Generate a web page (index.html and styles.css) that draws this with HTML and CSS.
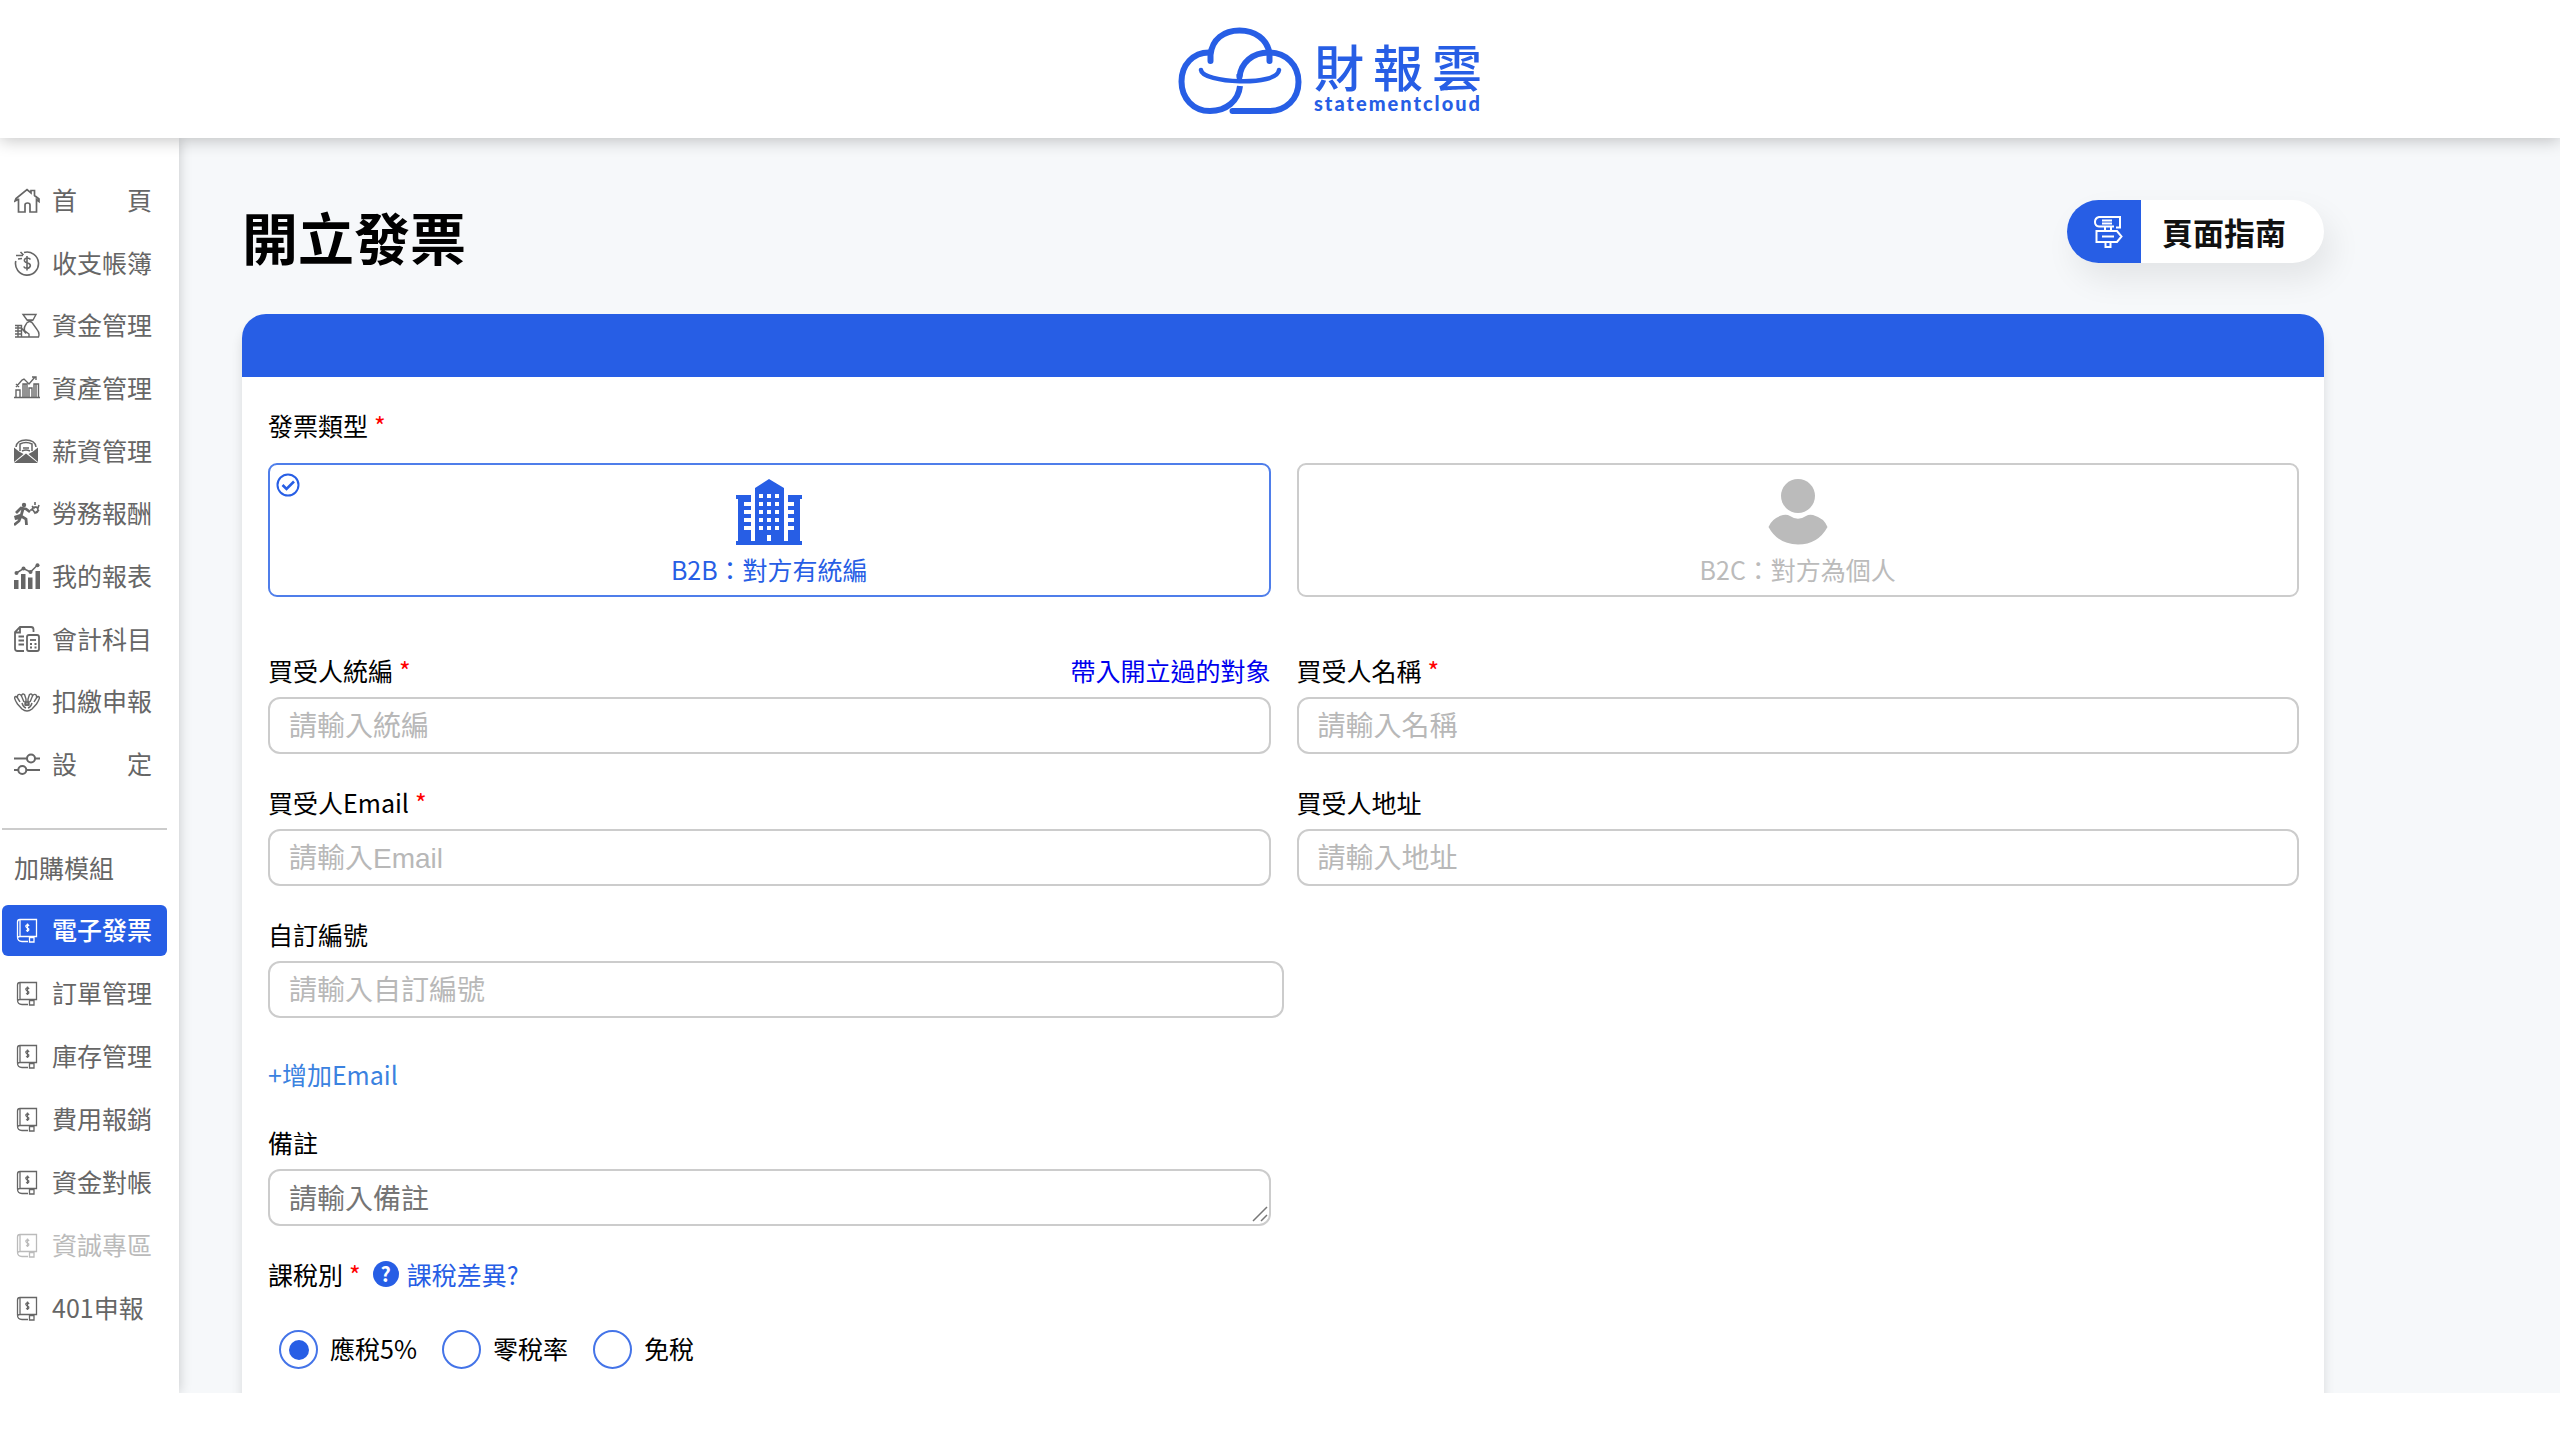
FILE: index.html
```html
<!DOCTYPE html>
<html lang="zh-Hant">
<head>
<meta charset="utf-8">
<meta name="viewport" content="width=device-width, initial-scale=1">
<title>開立發票 - 財報雲</title>
<link rel="stylesheet" href="styles.css">
</head>
<body>
<svg class="sprite" aria-hidden="true">
  <symbol id="receipt" viewBox="0 0 26 26">
    <path d="M6 1.500H22.500V18.500H6Z M6 1.500Q3.500 1.500 3.500 4V19Q3.500 23.500 8 23.500H14 M3.500 20Q4 18.500 6 18.500 M15.500 19.500h4.500v4.500h-4.500z M15 8Q14.500 6.500 13 6.800Q11.500 7.200 12 8.800Q12.500 9.800 13.500 10Q15.200 10.500 14.800 12Q14 13.500 12 12.500 M13.500 5.500V14" fill="none" stroke="currentColor" stroke-width="1.300"/>
  </symbol>
</svg>

<header class="topbar">
  <a class="logo" href="#">
    <svg class="logo-cloud" viewBox="0 0 124 88" fill="none" stroke="currentColor" stroke-width="6" stroke-linecap="round" aria-hidden="true">
      <path d="M32.500 34V28C34 12 46 3.500 61.500 3.500S89 12 91.500 26V34"/>
      <path d="M31 25.500C15 25.500 3.500 38 3.500 54.500S15 84 32 84C48 84 60.500 74 62 59" stroke-linecap="butt"/>
      <path d="M61.500 50C63 36 74 25.500 91 25.500C108 25.500 120.500 38 120.500 55S108 84 91 84H54.500"/>
      <path d="M61.500 49.500V47" stroke-linecap="butt"/>
      <path d="M23 43C24 56 99 60 101 43" stroke-width="4.500"/>
    </svg>
    <span class="logo-text">
      <span class="logo-zh"><span>財</span><span>報</span><span>雲</span></span>
      <span class="logo-en">statementcloud</span>
    </span>
  </a>
</header>

<div class="shell">
  <nav class="sidebar" aria-label="主選單">
    <ul class="menu menu-main">
      <li><a class="item" href="#">
        <svg class="icon" viewBox="0 0 26 26" fill="none" stroke="currentColor" stroke-width="1.700"><path d="M4 11.500L1 13L2 10.500L13 1.500L17 5V2.500H20.500V7.500L25 11V13.500L22.500 11.500V24H16V17Q16 15 13.500 15T11 17V24H4.500V10.500"/></svg>
        <span class="spread"><span>首</span><span>頁</span></span></a></li>
      <li><a class="item" href="#">
        <svg class="icon" viewBox="0 0 26 26" fill="none" stroke="currentColor" stroke-width="1.600"><path d="M10 2.500A11.500 11.500 0 1 1 1.800 11M2 5.500H9M6.500 2L9.500 5M4 9L8 8.500M16.500 9.500Q15.500 8 13 8Q10 8.500 10.500 11Q11 12.500 13.500 13Q16.500 13.800 16.300 16Q15.500 18.300 13 18.300Q10.500 18.200 9.700 16.500M13 6V20.500"/></svg>
        <span>收支帳簿</span></a></li>
      <li><a class="item" href="#">
        <svg class="icon" viewBox="0 0 26 26" fill="none" stroke="currentColor" stroke-width="1.400"><path d="M9 1.500H22L19 7H13ZM13 7L18 9.500M19 7L13 9.500M13.500 9C11 13 9 15 11 18L15 21V24H24.500Q26 20 23 16.500L18 9.500M1 12.500H7.500V24H1M1 15H7M1 18H7M1 21H7M4 12.500V24M7.500 24H15M7.500 15L12 20.500"/></svg>
        <span>資金管理</span></a></li>
      <li><a class="item" href="#">
        <svg class="icon" viewBox="0 0 26 26" fill="none" stroke="currentColor" stroke-width="1.400"><path d="M0 22.500H26M2 22V15H6V22M9 22V9H13V22M11 9V22M15 22V13H18V22M20 22V9H24.500V22M22 9V22M2 12L8 5L10 4L15 9L21 2M18 2H22V5M2 9L5 12"/></svg>
        <span>資產管理</span></a></li>
      <li><a class="item" href="#">
        <svg class="icon" viewBox="0 0 26 26"><path d="M0 9.500L5 13.500L9.500 16L0 24ZM24 9.500L19 13.500L14.500 16L24 24ZM0 25L12 15.500L24 25Z" fill="currentColor"/><path d="M2 9Q3 2 12 2T22 9M6 13V6Q12 3 18 6V13M9 10H15M8 13Q12 11 16 13" fill="none" stroke="currentColor" stroke-width="1.500"/></svg>
        <span>薪資管理</span></a></li>
      <li><a class="item" href="#">
        <svg class="icon" viewBox="0 0 26 26"><circle cx="10" cy="4" r="2.200" fill="currentColor"/><path d="M2 12L7 7L12 8L16 11M9 8L7 15L12 18L12.500 24M7 15L5 20L0 24" fill="none" stroke="currentColor" stroke-width="2.800"/><path d="M0 15L6 13L7 18L1 19Z" fill="currentColor"/><path d="M16 9H19L21 12L25 9M18 5L20 7Q22 5 24 7L25 4M21 1V4M18 9Q18 6 21 6T24 9T21 12" fill="none" stroke="currentColor" stroke-width="1.600"/></svg>
        <span>勞務報酬</span></a></li>
      <li><a class="item" href="#">
        <svg class="icon" viewBox="0 0 26 26"><path d="M0 17H4.500V26H0ZM7 11H11.500V26H7ZM14 14.500H18.500V26H14ZM21.500 8H26V26H21.500Z" fill="currentColor"/><path d="M2.500 10L9.500 5.500L16.500 9L23.500 2" fill="none" stroke="currentColor" stroke-width="1.500"/><g fill="currentColor"><circle cx="2.500" cy="10" r="2"/><circle cx="9.500" cy="5.500" r="2"/><circle cx="16.500" cy="9" r="2"/><circle cx="23.500" cy="2.200" r="2"/></g></svg>
        <span>我的報表</span></a></li>
      <li><a class="item" href="#">
        <svg class="icon" viewBox="0 0 26 26" fill="none" stroke="currentColor" stroke-width="1.800"><path d="M10 25H3.500Q1 25 1 22.500V6L6 1H17Q19.500 1 19.500 3.500V6M1 6.500H6V1M4.500 10.500H10M4.500 14.500H10M4.500 18.500H10"/><rect x="13" y="9" width="12" height="16" rx="2"/><path d="M16 14H22"/><path d="M16 18H18M20.500 18H22.500M16 21.500H18M20.500 21.500H22.500"/></svg>
        <span>會計科目</span></a></li>
      <li><a class="item" href="#">
        <svg class="icon" viewBox="0 0 26 26" fill="none" stroke="currentColor" stroke-width="1.400"><path d="M8 20L3.500 15Q-1 8 1.500 7.500Q3 7.500 6 13M3.500 9V6.500Q5.500 4 7.500 7L10 13M7.500 7Q8 4 10.500 5.500L12 10V17M18 20L22.500 15Q27 8 24.500 7.500Q23 7.500 20 13M22.500 9V6.500Q20.500 4 18.500 7L16 13M18.500 7Q18 4 15.500 5.500L14 10V17M8 14Q9 18 12 19M18 14Q17 18 14 19M8 20Q13 24 18 20M11 13H15V16H11Z"/></svg>
        <span>扣繳申報</span></a></li>
      <li><a class="item" href="#">
        <svg class="icon" viewBox="0 0 26 26" fill="none" stroke="currentColor" stroke-width="2"><path d="M0 7.500H13M21 7.500H26M0 19H4M12.500 19H26"/><circle cx="17" cy="7.500" r="4"/><circle cx="8.300" cy="19" r="4"/></svg>
        <span class="spread"><span>設</span><span>定</span></span></a></li>
    </ul>
    <hr class="rule">
    <p class="menu-title">加購模組</p>
    <ul class="menu menu-addon">
      <li><a class="item active" href="#" aria-current="page"><svg class="icon"><use href="#receipt"/></svg><span>電子發票</span></a></li>
      <li><a class="item" href="#"><svg class="icon"><use href="#receipt"/></svg><span>訂單管理</span></a></li>
      <li><a class="item" href="#"><svg class="icon"><use href="#receipt"/></svg><span>庫存管理</span></a></li>
      <li><a class="item" href="#"><svg class="icon"><use href="#receipt"/></svg><span>費用報銷</span></a></li>
      <li><a class="item" href="#"><svg class="icon"><use href="#receipt"/></svg><span>資金對帳</span></a></li>
      <li><a class="item disabled" href="#" aria-disabled="true"><svg class="icon"><use href="#receipt"/></svg><span>資誠專區</span></a></li>
      <li><a class="item" href="#"><svg class="icon"><use href="#receipt"/></svg><span>401申報</span></a></li>
    </ul>
  </nav>

  <main class="content">
    <div class="page-head">
      <h1>開立發票</h1>
      <button class="guide" type="button">
        <span class="guide-icon">
          <svg viewBox="0 0 30 34" fill="none" stroke="currentColor" stroke-width="2" aria-hidden="true"><path d="M21 11.500H6Q2 11 2 7T6 2H27V12.500H23M9 5.500H19M9 8.500H19M12 12V16M18 12V16M3.500 16H24L28.500 21.500L24 27H3.500ZM9 21.500H21M12.500 27V32H17.500V27"/></svg>
        </span>
        <span class="guide-text">頁面指南</span>
      </button>
    </div>

    <section class="card">
      <div class="card-bar"></div>
      <form class="form">
        <fieldset class="types">
          <legend class="label">發票類型<span class="req">*</span></legend>
          <div class="columns">
            <button class="type selected" type="button" aria-pressed="true">
              <svg class="tick" viewBox="0 0 24 24" fill="none" stroke="currentColor" stroke-width="2" aria-hidden="true"><circle cx="12" cy="12" r="10.500"/><path d="M6.500 12L10.500 16L18 8.500" stroke-width="2.600"/></svg>
              <svg class="type-icon" viewBox="0 0 66 66" fill="currentColor" aria-hidden="true"><path fill-rule="evenodd" d="M0 66V62H2V20H0V16H15V23H8V27H15V31H8V35H15V39H8V43H15V47H8V51H15V62H19V9L33 0L48 9V62H52V51H58V47H52V43H58V39H52V35H58V31H52V27H58V23H52V16H66V20H64V62H66V66ZM23 15v4h4v-4zM31 15v4h4v-4zM39 15v4h4v-4zM23 23v4h4v-4zM31 23v4h4v-4zM39 23v4h4v-4zM23 31v4h4v-4zM31 31v4h4v-4zM39 31v4h4v-4zM23 39v4h4v-4zM31 39v4h4v-4zM39 39v4h4v-4zM23 47v4h4v-4zM31 47v4h4v-4zM39 47v4h4v-4zM31 56v6h4v-6z"/></svg>
              <span>B2B：對方有統編</span>
            </button>
            <button class="type" type="button" aria-pressed="false">
              <svg class="type-icon" viewBox="0 0 66 66" fill="currentColor" aria-hidden="true"><circle cx="33" cy="17" r="17"/><path d="M18 36Q22 35 25 37Q33 42.500 41 37Q44 35 48 36Q59 39 62.500 48Q53 65.500 33 65.500T3.500 48Q7 39 18 36Z"/></svg>
              <span>B2C：對方為個人</span>
            </button>
          </div>
        </fieldset>

        <div class="columns rows">
          <div class="field">
            <div class="label-row">
              <label class="label" for="tax-id">買受人統編<span class="req">*</span></label>
              <a class="pick" href="#">帶入開立過的對象</a>
            </div>
            <input id="tax-id" type="text" placeholder="請輸入統編">
          </div>
          <div class="field">
            <label class="label" for="buyer">買受人名稱<span class="req">*</span></label>
            <input id="buyer" type="text" placeholder="請輸入名稱">
          </div>
          <div class="field">
            <label class="label" for="email">買受人Email<span class="req">*</span></label>
            <input id="email" type="email" placeholder="請輸入Email">
          </div>
          <div class="field">
            <label class="label" for="address">買受人地址</label>
            <input id="address" type="text" placeholder="請輸入地址">
          </div>
        </div>

        <div class="field half">
          <label class="label" for="custom-no">自訂編號</label>
          <input id="custom-no" type="text" placeholder="請輸入自訂編號">
        </div>

        <a class="add-email" href="#">+增加Email</a>

        <div class="columns">
          <div class="field memo">
            <label class="label" for="memo">備註</label>
            <textarea id="memo" rows="1" placeholder="請輸入備註"></textarea>
            <svg class="grip" viewBox="0 0 16 16" fill="none" stroke="#777" stroke-width="1.500" aria-hidden="true"><path d="M1 15L15 1M9 15L15 9"/></svg>
          </div>
        </div>

        <fieldset class="tax">
          <legend class="label tax-legend">課稅別<span class="req">*</span>
            <a class="help" href="#"><span class="help-mark">?</span>課稅差異?</a>
          </legend>
          <div class="radios">
            <label class="radio"><input type="radio" name="tax" checked><span>應稅5%</span></label>
            <label class="radio"><input type="radio" name="tax"><span>零稅率</span></label>
            <label class="radio"><input type="radio" name="tax"><span>免稅</span></label>
          </div>
        </fieldset>
      </form>
    </section>
  </main>
</div>
</body>
</html>
```
FILE: styles.css
```css
* {
  box-sizing: border-box;
}

body {
  margin: 0;
  background: #fff;
  color: #000;
  font-family: "Noto Sans CJK TC", sans-serif;
  font-size: 25px;
  line-height: 36px;
}

a {
  text-decoration: none;
}

ul,
p,
h1,
fieldset {
  margin: 0;
  padding: 0;
  border: 0;
  list-style: none;
}

.sprite {
  position: absolute;
  width: 0;
  height: 0;
}

/* Top bar */
.topbar {
  position: relative;
  z-index: 2;
  display: flex;
  justify-content: center;
  padding: 27px 0 23px 100px;
  background: #fff;
  box-shadow: 0 2px 16px rgba(0, 0, 0, 0.24);
}

.logo {
  display: flex;
  gap: 12px;
  color: #275ee5;
}

.logo-cloud {
  width: 124px;
  height: 88px;
}

.logo-text {
  display: flex;
  flex-direction: column;
  padding-top: 12px;
}

.logo-zh {
  display: flex;
  justify-content: space-between;
  font-size: 50px;
  font-weight: 500;
  line-height: 52px;
}

.logo-en {
  font-family: Lato, sans-serif;
  font-size: 20px;
  font-weight: 900;
  letter-spacing: 2px;
  line-height: 24px;
}

/* Shell */
.shell {
  display: flex;
  background: #f6f8fa;
}

.sidebar {
  flex: none;
  width: 179px;
  padding: 37px 12px 37px 2px;
  background: #fff;
  box-shadow: 0 0 12px rgba(0, 0, 0, 0.2);
  color: #666;
}

.menu {
  display: flex;
  flex-direction: column;
}

.menu-main {
  height: 615px;
  justify-content: space-between;
}

.menu-addon {
  gap: 12px;
}

.item {
  display: flex;
  align-items: center;
  gap: 12px;
  height: 51px;
  padding-left: 12px;
  border-radius: 6px;
  color: #666;
}

.item > span {
  padding-bottom: 3px;
}

.item.active {
  background: #275ee5;
  color: #fff;
  font-weight: 500;
}

.item.disabled {
  color: #bbb;
}

.icon {
  flex: none;
  width: 26px;
  height: 26px;
}

.spread {
  display: flex;
  justify-content: space-between;
  width: 100px;
}

.rule {
  height: 2px;
  margin: 38px 0 12px;
  border: 0;
  background: #ccc;
}

.menu-title {
  margin-bottom: 12px;
  padding-left: 12px;
  line-height: 51px;
}

/* Page content */
.content {
  flex: 1;
  padding: 62px 236px 0 63px;
}

.page-head {
  display: flex;
  align-items: flex-start;
  justify-content: space-between;
  margin-bottom: 42px;
}

h1 {
  font-size: 56px;
  font-weight: 700;
  line-height: 72px;
}

.guide {
  display: flex;
  overflow: hidden;
  height: 63px;
  padding: 0;
  border: 0;
  border-radius: 32px;
  background: #fff;
  box-shadow: 8px 16px 32px rgba(0, 0, 0, 0.08);
  color: #111;
  font: 700 31px/63px "Noto Sans CJK TC", sans-serif;
}

.guide-icon {
  display: flex;
  align-items: center;
  padding: 0 18px 0 26px;
  background: #275ee5;
  color: #fff;
}

.guide-icon svg {
  width: 30px;
  height: 34px;
}

.guide-text {
  padding: 0 38px 0 21px;
}

.card {
  border-radius: 24px 24px 0 0;
  background: #fff;
  box-shadow: 0 10px 12px rgba(0, 0, 0, 0.12);
}

.card-bar {
  height: 63px;
  border-radius: 24px 24px 0 0;
  background: #275ee5;
}

/* Form */
.form {
  padding: 32px 25px 24px 26px;
}

.label,
.pick {
  display: block;
  padding: 0;
  line-height: 32px;
}

.req {
  margin-left: 6px;
  color: #f00;
}

.columns {
  display: grid;
  grid-template-columns: 1fr 1fr;
  gap: 32px 26px;
}

.types {
  margin-bottom: 57px;
}

.types .label {
  margin-bottom: 22px;
}

.type {
  position: relative;
  display: flex;
  flex-direction: column;
  align-items: center;
  gap: 6px;
  height: 134px;
  padding: 14px 0 0;
  border: 2px solid #ccc;
  border-radius: 9px;
  background: #fff;
  color: #bbb;
  font: 25px/36px "Noto Sans CJK TC", sans-serif;
}

.type.selected {
  border-color: #4f7eea;
  color: #275ee5;
}

.type-icon {
  width: 66px;
  height: 66px;
}

.tick {
  position: absolute;
  top: 8px;
  left: 6px;
  width: 24px;
  height: 24px;
}

.rows {
  margin-bottom: 32px;
}

.label-row {
  display: flex;
  justify-content: space-between;
}

.pick {
  color: #00e;
}

.field input,
.field textarea {
  display: block;
  width: 100%;
  height: 57px;
  margin-top: 11px;
  padding: 2px 19px 0;
  border: 2px solid #ccc;
  border-radius: 12px;
  background: #fff;
  font: 28px/40px "Liberation Sans", "Noto Sans CJK TC", sans-serif;
}

.field input::placeholder {
  color: #b8b8b8;
}

.field textarea {
  padding-top: 9px;
  resize: none;
}

.memo {
  position: relative;
}

.grip {
  position: absolute;
  right: 3px;
  bottom: 4px;
  width: 16px;
  height: 16px;
}

.half {
  width: 50%;
}

.add-email {
  display: block;
  margin: 38px 0 34px;
  color: #3b82e0;
}

.tax {
  margin-top: 32px;
}

.tax-legend {
  display: flex;
  align-items: center;
  margin-bottom: 40px;
}

.help {
  display: flex;
  align-items: center;
  gap: 8px;
  margin-left: 12px;
  color: #275ee5;
}

.help-mark {
  width: 26px;
  height: 26px;
  border-radius: 50%;
  background: #275ee5;
  color: #fff;
  font-size: 20px;
  font-weight: 700;
  line-height: 26px;
  text-align: center;
}

.radios {
  display: flex;
  gap: 25px;
  padding-left: 11px;
}

.radio {
  display: flex;
  align-items: center;
  gap: 12px;
}

.radio span {
  padding-bottom: 3px;
}

.radio input {
  display: grid;
  place-content: center;
  width: 39px;
  height: 39px;
  margin: 0;
  border: 2px solid #4474e8;
  border-radius: 50%;
  background: #fff;
  appearance: none;
}

.radio input:checked::before {
  content: "";
  width: 20px;
  height: 20px;
  border-radius: 50%;
  background: #275ee5;
}
```
